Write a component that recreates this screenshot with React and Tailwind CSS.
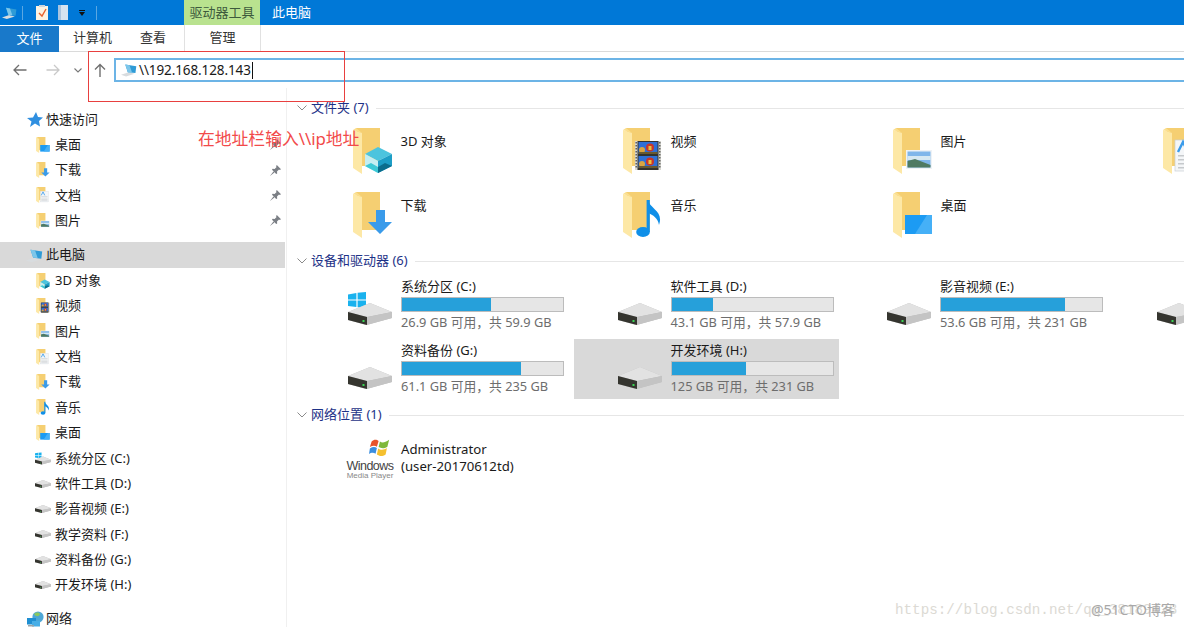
import React from 'react';

const FONT = "font-['Noto_Sans','Noto_Sans_CJK_SC',sans-serif]";

const Balloon = ({ y }) => (
    <g>
        <rect x="15.5" y={y} width="19" height="12" fill="#2f6fd6" />
        <circle cx="19" cy={y + 8} r="3" fill="#d9a441" />
        <circle cx="27" cy={y + 5.5} r="4" fill="#c9362b" />
        <rect x="25.5" y={y + 4} width="3" height="4" fill="#e8c23c" />
        <rect x="15.5" y={y + 10} width="19" height="2" fill="#6a5a30" />
    </g>
);

const Overlay = ({ kind }) => {
    if (kind === 'cube') return (
        <g>
            <polygon points="12,26 25,19 39,26 25,33" fill="#4cc4de" />
            <polygon points="12,26 25,33 25,45 12,38" fill="#c5eef2" />
            <polygon points="25,33 39,26 39,38 25,45" fill="#1d9ec6" />
            <polygon points="12,38 18,35 25,39 25,45" fill="#3cc9d6" />
            <polygon points="25,39 32,35 39,38 25,45" fill="#0b6d8c" />
        </g>
    );
    if (kind === 'down') return (
        <polygon points="23,18 32,18 32,30 39,30 27,42 15,30 23,30" fill="#3a9bea" />
    );
    if (kind === 'picture') return (
        <g>
            <rect x="13" y="22" width="26" height="19" fill="#eef2f6" />
            <rect x="14.5" y="23.5" width="23" height="16" fill="#7fb6ea" />
            <rect x="14.5" y="28" width="23" height="4" fill="#d5e8f2" />
            <polygon points="14.5,33 22,31 37.5,37 37.5,39.5 14.5,39.5" fill="#4f7a62" />
        </g>
    );
    if (kind === 'desktop') return (
        <g>
            <rect x="12" y="23" width="27" height="19" fill="#1c9bf3" />
            <polygon points="22,42 34,23 39,23 39,42" fill="#45b0f7" />
        </g>
    );
    if (kind === 'video') return (
        <g>
            <rect x="12" y="13" width="26" height="29" fill="#d8d8d2" />
            <rect x="14.5" y="13" width="21" height="29" fill="#33332f" />
            <Balloon y={14} />
            <Balloon y={28} />
            <path d="M13.2 14 V41 M36.8 14 V41" stroke="#555" strokeWidth="1.4" strokeDasharray="1.5 1.5" />
        </g>
    );
    if (kind === 'music') return (
        <g>
            <ellipse cx="20" cy="40" rx="6.8" ry="5" fill="#0f8fe8" />
            <rect x="23.6" y="8" width="3.2" height="32" fill="#0f8fe8" />
            <path d="M25 8 C27 17 41 19 36 33 C35 26 30 23 25 21 Z" fill="#0f8fe8" />
        </g>
    );
    if (kind === 'doc') return (
        <g>
            <rect x="12" y="12" width="24" height="31" fill="#f4f6f8" stroke="#c9ced3" strokeWidth="0.7" />
            <path d="M15 24 L20 14 L25 24" fill="none" stroke="#3a9bea" strokeWidth="2.4" />
            <rect x="15" y="27" width="18" height="1.5" fill="#c6c9cc" />
            <rect x="15" y="31" width="18" height="1.5" fill="#c6c9cc" />
            <rect x="15" y="35" width="18" height="1.5" fill="#c6c9cc" />
            <rect x="15" y="39" width="18" height="1.5" fill="#c6c9cc" />
        </g>
    );
    return null;
};

const Folder = ({ kind, w = 40, h = 46 }) => (
    <svg width={w} height={h} viewBox="0 0 40 46" className="shrink-0">
        <polygon points="3,0 27,0 27,38 9,38" fill="#f5cf72" />
        <polygon points="0,2 9,5 9,46 0,40" fill="#fde8a6" />
        <polygon points="3,0 9,5 0,2" fill="#fbdf8f" />
        <Overlay kind={kind} />
    </svg>
);

const DriveShape = () => (
    <g>
        <polygon points="22,0 44,9 44,15 18,22 0,17 0,9" fill="#bdbdbd" />
        <polygon points="0,9 22,0 44,9 19,14" fill="#e2e2e2" />
        <polygon points="19,14 44,9 44,15 19,22" fill="#c4c4c4" />
        <polygon points="0,9 19,14 19,22 0,17" fill="#35352f" />
        <rect x="14.5" y="17" width="2" height="2" fill="#39d353" />
    </g>
);

const Drive = ({ w = 44, h = 22 }) => (
    <svg width={w} height={h} viewBox="0 0 44 22" className="shrink-0">
        <DriveShape />
    </svg>
);

const DriveWin = ({ w = 44, h = 33 }) => (
    <svg width={w} height={h} viewBox="0 0 44 33" className="shrink-0">
        <polygon points="0,2.4 8.4,1 8.4,7.6 0,7.6" fill="#1ab2ee" />
        <polygon points="9.6,0.8 18,0 18,7.6 9.6,7.6" fill="#1ab2ee" />
        <polygon points="0,8.6 8.4,8.6 8.4,15 0,14" fill="#1ab2ee" />
        <polygon points="9.6,8.6 18,8.6 18,16 9.6,15.2" fill="#1ab2ee" />
        <g transform="translate(0 11)"><DriveShape /></g>
    </svg>
);

const PC = ({ w = 20, h = 15 }) => (
    <svg width={w} height={h} viewBox="0 0 20 15" className="shrink-0">
        <polygon points="0,13 9,10 16,12 6,15" fill="#d8dcdf" />
        <polygon points="5,1 18,3 17,11 8,10" fill="#2f9bd6" />
        <polygon points="5,1 10,1.8 13,10.4 8,10" fill="#7cc6ea" />
    </svg>
);

const Pin = () => (
    <svg width="11" height="11" viewBox="0 0 11 11">
        <path d="M6.8 0 L11 4.2 L9.8 5 L9 4.4 L7 6.4 L7.2 8.4 L6.2 9 L2 4.8 L2.6 3.8 L4.6 4 L6.6 2 L6 1.2 Z M3.4 6.6 L0 11 L4.4 7.6 Z" fill="#7b7f85" />
    </svg>
);

const Chevron = () => (
    <svg width="10" height="6" viewBox="0 0 10 6" className="shrink-0">
        <path d="M0.5 0.5 L5 5 L9.5 0.5" fill="none" stroke="#8a8a8a" strokeWidth="1" />
    </svg>
);

const NetworkIcon = () => (
    <svg width="17" height="17" viewBox="0 0 17 17" className="shrink-0">
        <circle cx="11" cy="6" r="5.6" fill="#4ea7d6" />
        <path d="M7 3 C9 1 12 1 13 3 C12 6 9 6 7 3 Z" fill="#8bc860" />
        <rect x="0" y="7" width="9" height="6.5" fill="#1f8fd2" />
        <rect x="5" y="10" width="8" height="5.5" fill="#47aee6" />
        <rect x="1" y="14" width="6" height="1.5" fill="#9aa3a8" />
    </svg>
);

const WmpLogo = () => (
    <svg width="21" height="21" viewBox="0 0 24 24">
        <path d="M3 5 C6 2 9 3 11 4.5 L9 11 C7 9.5 4 9.5 1 11.5 Z" fill="#e8532b" />
        <path d="M12.5 5 C15 7 18 6.5 23 3 L21 11 C17 13.5 14 13 11 11.5 Z" fill="#7eb83a" />
        <path d="M1 13 C4 11 7 11 9 12.5 L7.5 19 C5 17.5 2 18 0 19.5 Z" fill="#3a8ee0" />
        <path d="M10.5 13 C13 15 17 15 20.5 12.5 L19 20 C15 22.5 12 22 9 20 Z" fill="#f5c02f" />
    </svg>
);

const navTop = [
    { label: '桌面', kind: 'desktop', pin: true },
    { label: '下载', kind: 'down', pin: true },
    { label: '文档', kind: 'doc', pin: true },
    { label: '图片', kind: 'picture', pin: true },
];
const navPc = [
    { label: '3D 对象', kind: 'cube' },
    { label: '视频', kind: 'video' },
    { label: '图片', kind: 'picture' },
    { label: '文档', kind: 'doc' },
    { label: '下载', kind: 'down' },
    { label: '音乐', kind: 'music' },
    { label: '桌面', kind: 'desktop' },
];
const navDrives = ['软件工具 (D:)', '影音视频 (E:)', '教学资料 (F:)', '资料备份 (G:)', '开发环境 (H:)'];

// 4th column sits past the window edge, only its icon shows
const folders = [
    { label: '3D 对象', kind: 'cube' },
    { label: '视频', kind: 'video' },
    { label: '图片', kind: 'picture' },
    { label: '', kind: 'doc' },
    { label: '下载', kind: 'down' },
    { label: '音乐', kind: 'music' },
    { label: '桌面', kind: 'desktop' },
];

const drives = [
    { name: '系统分区 (C:)', free: '26.9 GB 可用，共 59.9 GB', pct: 55, win: true },
    { name: '软件工具 (D:)', free: '43.1 GB 可用，共 57.9 GB', pct: 26 },
    { name: '影音视频 (E:)', free: '53.6 GB 可用，共 231 GB', pct: 77 },
    { name: '', free: '', pct: 0, stub: true },
    { name: '资料备份 (G:)', free: '61.1 GB 可用，共 235 GB', pct: 74 },
    { name: '开发环境 (H:)', free: '125 GB 可用，共 231 GB', pct: 46, selected: true },
];

const NavRow = ({ icon, label, pin, selected, indent }) => (
    <div className={`flex items-center h-[25.4px] w-[285px] ${selected ? 'bg-[#d9d9d9]' : ''} ${indent ? 'pl-[34px]' : 'pl-[27px]'}`}>
        <div className={`flex justify-center ${indent ? 'w-[18px]' : 'w-[16px]'} mr-[3px]`}>{icon}</div>
        <span className="text-[13px] text-[#1a1a1a] flex-1 whitespace-nowrap">{label}</span>
        {pin && <span className="mr-[4px] flex"><Pin /></span>}
    </div>
);

const SectionHead = ({ title, className }) => (
    <div className={`flex items-center h-[18px] pl-[10px] ${className}`}>
        <Chevron />
        <span className="text-[13px] text-[#1e3287] ml-[4px] whitespace-nowrap">{title}</span>
        <div className="flex-1 h-px bg-[#e6e6e6] ml-[7px]" />
    </div>
);

const DriveTile = ({ d }) => {
    if (d.stub) return (
        <div className="h-[60px] pl-[44px] pt-[28px]"><Drive /></div>
    );
    return (
        <div className={`flex h-[60px] w-[265px] ${d.selected ? 'bg-[#d9d9d9]' : ''}`}>
            <div className={`w-[97px] pl-[44px] shrink-0 ${d.win ? 'pt-[17px]' : 'pt-[28px]'}`}>
                {d.win ? <DriveWin /> : <Drive />}
            </div>
            <div className="flex flex-col pt-[3px]">
                <span className="text-[13px] leading-[17px] text-[#1a1a1a] whitespace-nowrap">{d.name}</span>
                <div className="w-[163px] h-[15px] mt-[2px] bg-[#e6e6e6] border border-[#bcbcbc]">
                    <div className="h-full bg-[#26a0da]" style={{ width: `${d.pct}%` }} />
                </div>
                <span className="text-[12.8px] leading-[17px] mt-[1.5px] text-[#6d6d6d] whitespace-nowrap">{d.free}</span>
            </div>
        </div>
    );
};

const App = () => {
    return (
        <div className={`relative w-[1184px] h-[627px] overflow-hidden bg-white ${FONT}`}>
            {/* 标题栏 */}
            <header className="h-[25px] bg-[#0078d7] flex items-center">
                <div className="flex items-center pl-[2px] w-[184px] h-full">
                    <PC w={16} h={14} />
                    <div className="w-px h-[14px] bg-[#5aa7e2] ml-[4px]" />
                    <svg width="12" height="15" viewBox="0 0 12 15" className="ml-[13px]">
                        <rect x="0" y="1" width="12" height="14" fill="#fdf3e2" />
                        <rect x="3" y="0" width="6" height="2" fill="#cfd6dc" />
                        <path d="M3 8 L6 11 L10 4" fill="none" stroke="#e8622c" strokeWidth="1.4" />
                    </svg>
                    <svg width="10" height="15" viewBox="0 0 10 15" className="ml-[10px]">
                        <rect x="0" y="0" width="10" height="15" fill="#d5e3f0" />
                        <rect x="0" y="0" width="3" height="15" fill="#a9c4df" />
                    </svg>
                    <svg width="6" height="6" viewBox="0 0 6 6" className="ml-[11px]">
                        <rect x="0" y="0" width="6" height="1" fill="#111" />
                        <polygon points="0,2 6,2 3,6" fill="#111" />
                    </svg>
                    <div className="w-px h-[14px] bg-[#5aa7e2] ml-[11px]" />
                </div>
                <div className="w-[76px] h-full bg-[#b9e28f] text-[13px] text-[#3d5a3d] flex items-center justify-center">驱动器工具</div>
                <span className="text-[13px] text-white ml-[12px]">此电脑</span>
            </header>

            {/* 功能区选项卡 */}
            <nav className="h-[27px] flex items-center border-b border-[#dadada] text-[13px] text-[#333]">
                <div className="w-[59px] h-full -mb-px bg-[#1979ca] text-white flex items-center justify-center">文件</div>
                <span className="ml-[14px] w-[67px]">计算机</span>
                <span className="w-[44px]">查看</span>
                <div className="h-full w-[77px] border-x border-[#e1e1e1] flex items-center justify-center">管理</div>
            </nav>

            {/* 地址栏 */}
            <div className="h-[36px] flex items-center pl-[13px]">
                <svg width="14" height="12" viewBox="0 0 14 12">
                    <path d="M13.5 6 H1 M6 1 L1 6 L6 11" fill="none" stroke="#6f6f6f" strokeWidth="1.3" />
                </svg>
                <svg width="14" height="12" viewBox="0 0 14 12" className="ml-[19px]">
                    <path d="M0.5 6 H13 M8 1 L13 6 L8 11" fill="none" stroke="#c9c9c9" strokeWidth="1.3" />
                </svg>
                <svg width="8" height="5" viewBox="0 0 8 5" className="ml-[14px]">
                    <path d="M0.5 0.5 L4 4 L7.5 0.5" fill="none" stroke="#777" strokeWidth="1.1" />
                </svg>
                <svg width="12" height="14" viewBox="0 0 12 14" className="ml-[12px]">
                    <path d="M6 14 V1.5 M1 6.5 L6 1.5 L11 6.5" fill="none" stroke="#6f6f6f" strokeWidth="1.4" />
                </svg>
                <div className="ml-[8px] flex-1 h-[24px] border-2 border-[#6cb4e6] border-r-0 flex items-center pl-[5px]">
                    <PC w={17} h={14} />
                    <span className="text-[13.5px] text-[#1a1a1a] ml-px border-r border-[#111] leading-[17px] pr-px tracking-[-0.1px] whitespace-nowrap">\\192.168.128.143</span>
                </div>
            </div>

            <div className="flex">
                {/* 导航窗格 */}
                <aside className="w-[287px] h-[540px] shrink-0 border-r border-[#f0f0f0] pt-[18.6px]">
                    <NavRow icon={<svg width="16" height="15" viewBox="0 0 16 15"><polygon points="9,0 11,5 16,5.5 12,9 13,14.5 8,11.5 3,15 4.5,9.5 0,6 6,5.5" fill="#2f8fe0" /></svg>} label="快速访问" />
                    {navTop.map(n => (
                        <NavRow key={n.label} indent pin icon={<Folder kind={n.kind} w={14} h={16} />} label={n.label} />
                    ))}
                    <div className="h-[8.9px]" />
                    <NavRow selected icon={<PC w={18} h={15} />} label="此电脑" />
                    {navPc.map(n => (
                        <NavRow key={n.label} indent icon={<Folder kind={n.kind} w={14} h={16} />} label={n.label} />
                    ))}
                    <NavRow indent icon={<DriveWin w={16} h={13} />} label="系统分区 (C:)" />
                    {navDrives.map(n => (
                        <NavRow key={n} indent icon={<Drive w={16} h={8} />} label={n} />
                    ))}
                    <div className="h-[8.5px]" />
                    <NavRow icon={<NetworkIcon />} label="网络" />
                </aside>

                {/* 内容区 */}
                <main className="flex-1 overflow-hidden">
                    <SectionHead title="文件夹 (7)" className="mt-[11px]" />
                    <div className="grid grid-cols-[repeat(4,270px)] auto-rows-[64px] mt-[11px] pl-[17px]">
                        {folders.map(f => (
                            <div key={f.kind} className="flex h-[64px]">
                                <div className="w-[96.5px] pl-[49px] shrink-0"><Folder kind={f.kind} /></div>
                                <span className="text-[13px] text-[#1a1a1a] leading-[18px] mt-[4px] whitespace-nowrap">{f.label}</span>
                            </div>
                        ))}
                    </div>
                    <SectionHead title="设备和驱动器 (6)" className="mt-[-4px]" />
                    <div className="grid grid-cols-[repeat(4,269.5px)] auto-rows-[60px] gap-y-[4px] mt-[5px] pl-[17px]">
                        {drives.map((d, i) => <DriveTile key={i} d={d} />)}
                    </div>
                    <SectionHead title="网络位置 (1)" className="mt-[7px]" />
                    <div className="flex mt-[13px] pl-[62px]">
                        <div className="w-[42px] flex flex-col items-center shrink-0 text-[#444]">
                            <div className="self-end mr-[1px] flex"><WmpLogo /></div>
                            <span className="text-[12.5px] leading-[12px] mt-[2px] tracking-[-0.5px] whitespace-nowrap font-['Liberation_Sans',sans-serif]">Windows</span>
                            <span className="text-[8px] leading-[8px] text-[#888] whitespace-nowrap font-['Liberation_Sans',sans-serif]">Media Player</span>
                        </div>
                        <div className="text-[13.2px] leading-[17px] text-[#1a1a1a] pt-[4px] ml-[10px]">
                            <div>Administrator</div>
                            <div>(user-20170612td)</div>
                        </div>
                    </div>
                </main>
            </div>

            {/* 标注 */}
            <div className="absolute left-[88px] top-[51px] w-[257px] h-[51px] border border-[#e8403f]" />
            <div className="absolute left-[198px] top-[128px] text-[16.8px] leading-[22px] text-[#f24a4a] whitespace-nowrap font-['Noto_Sans','Noto_Sans_CJK_SC',serif]">在地址栏输入\\ip地址</div>
            {/* 水印 */}
            <div className="absolute left-[895px] top-[601px] text-[14.25px] leading-[18px] text-[#dcdad4] whitespace-nowrap font-['Liberation_Mono',monospace]">https://blog.csdn.net/qq_38189428</div>
            <div className="absolute left-[1091px] top-[601px] text-[14px] leading-[18px] text-[#a8a8a8] whitespace-nowrap">@51CTO博客</div>
        </div>
    );
};

export default App;
